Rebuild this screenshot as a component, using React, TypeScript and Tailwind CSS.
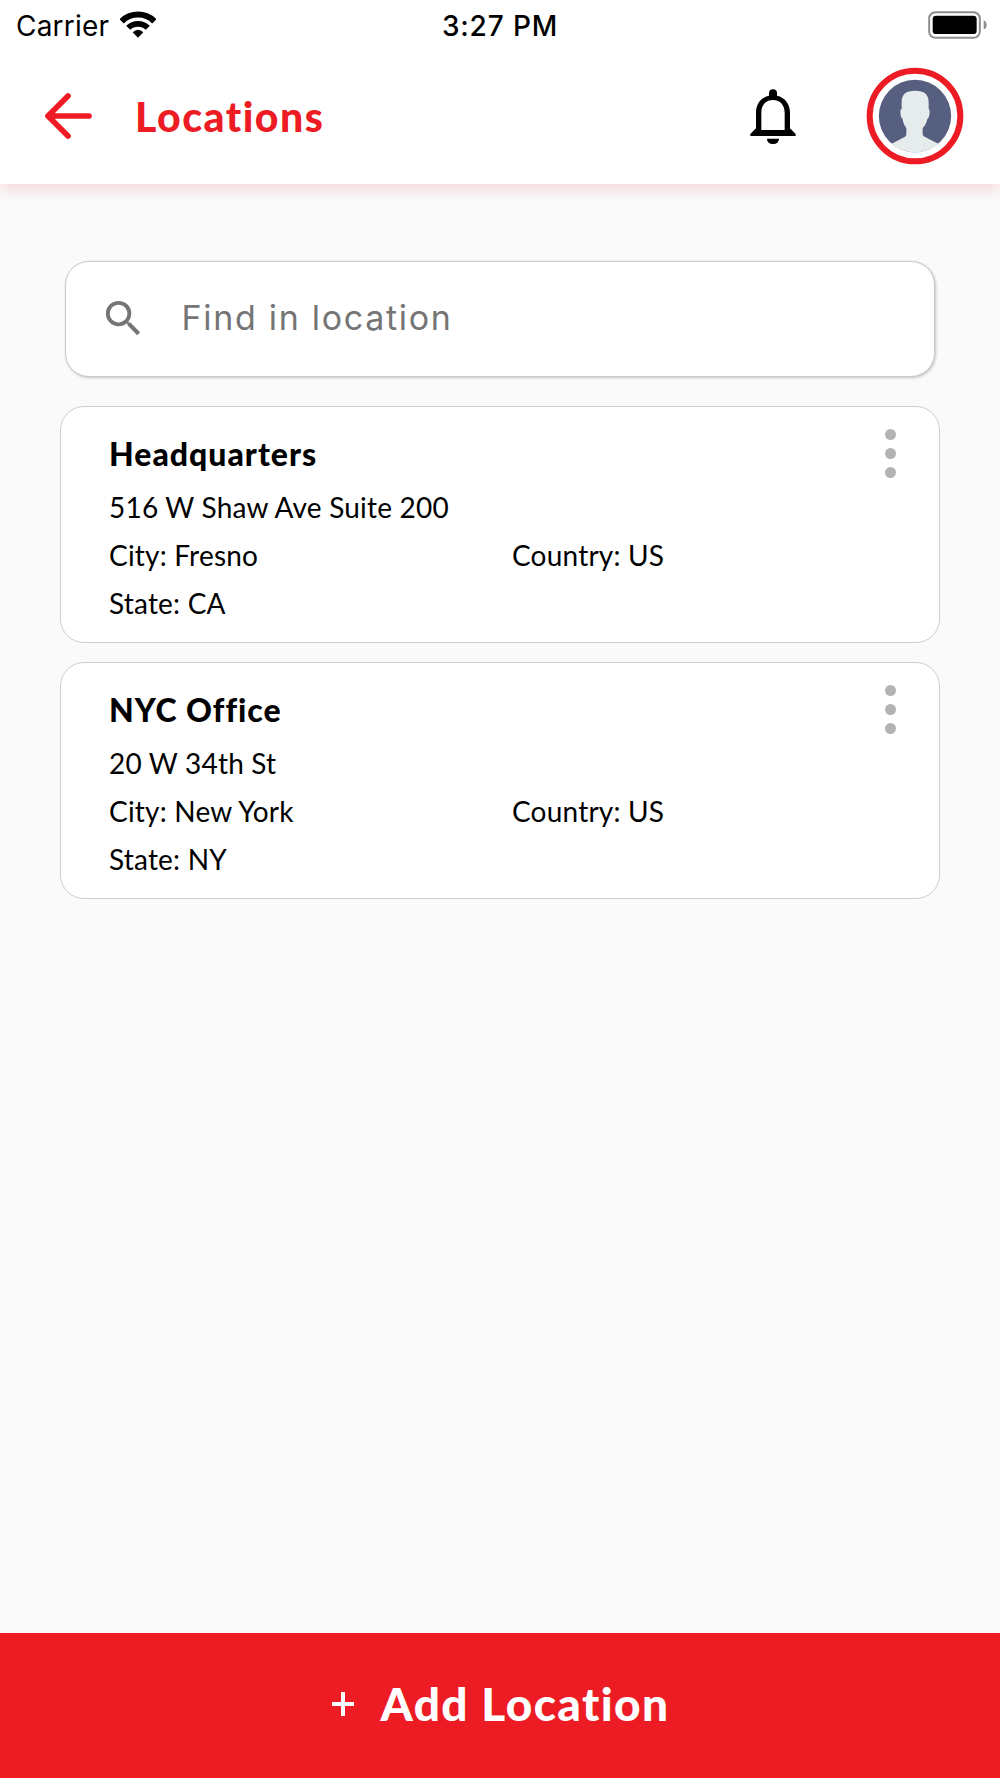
import { MdSearch } from "react-icons/md";

type Location = { name: string; address: string; city: string; state: string; country: string };

const locations: Location[] = [
  { name: "Headquarters", address: "516 W Shaw Ave Suite 200", city: "Fresno", state: "CA", country: "US" },
  { name: "NYC Office", address: "20 W 34th St", city: "New York", state: "NY", country: "US" },
];

function WifiIcon() {
  return (
    <svg className="mb-[3px] h-[27px] w-[36px]" viewBox="0 0 108 81" fill="none" stroke="#000">
      <path d="M5 31A69.5 69.5 0 0 1 103 31" strokeWidth="18" />
      <path d="M24.5 50.5A42 42 0 0 1 83.500 50.5" strokeWidth="17" />
      <path d="M54 80L38 64Q54 48 70 64Z" fill="#000" stroke="none" />
    </svg>
  );
}

function BatteryIcon() {
  return (
    <svg className="mb-[3px] h-[28px] w-[59px]" viewBox="0 0 177 84">
      <rect x="3.500" y="3.500" width="152" height="77" rx="19" fill="none" stroke="#8e8e8e" strokeWidth="6" />
      <rect x="14" y="14" width="132" height="55" rx="10" fill="#000" />
      <path d="M167 28Q176 32 176 42T167 56Z" fill="#8e8e8e" />
    </svg>
  );
}

function StatusBar() {
  return (
    <div className="grid h-[52px] grid-cols-[1fr_auto_1fr] items-center pl-[16px] pr-[13px] font-['Inter',sans-serif] text-[28px] leading-[52px] text-black">
      <div className="flex items-center gap-[11px]">
        <span className="tracking-[0.2px]">Carrier</span>
        <WifiIcon />
      </div>
      <span className="-ml-[3px] font-medium tracking-[0.85px]">3:27 PM</span>
      <div className="flex justify-end">
        <BatteryIcon />
      </div>
    </div>
  );
}

function BackArrow() {
  return (
    <svg
      className="h-[46px] w-[47px]"
      viewBox="0 0 141 138"
      fill="none"
      stroke="#ed1c24"
      strokeWidth="17"
      strokeLinecap="round"
      strokeLinejoin="round"
    >
      <path d="M132 69H9M69 9L9 69L69 129" />
    </svg>
  );
}

function BellIcon() {
  return (
    <svg className="mt-[2px] h-[56px] w-[46px]" viewBox="0 0 138 168">
      <path
        fillRule="evenodd"
        d="M57 13A12 12 0 0 1 81 13V20C105 25 120 45 120 71V118L137 135V141H1V135L18 118V71C18 45 33 25 57 20ZM69 33C47 33 34 49 34 71V123H104V71C104 49 91 33 69 33Z"
      />
      <path d="M51 149H87C87 159 79 165 69 165S51 159 51 149Z" />
    </svg>
  );
}

function Avatar() {
  return (
    <svg className="h-[98px] w-[98px]" viewBox="0 0 294 294">
      <clipPath id="avatar-disc">
        <circle cx="147" cy="147" r="109" />
      </clipPath>
      <circle cx="147" cy="147" r="136" fill="#fff" stroke="#ed1c24" strokeWidth="18" />
      <circle cx="147" cy="147" r="108.500" fill="#565f80" />
      <path
        clipPath="url(#avatar-disc)"
        fill="#e6ecec"
        d="M107 106C107 82 119 71 147 71S188 82 188 106V126Q191 127 191 133C191 145 189 154 184 156C182 168 177 176 170 183V202Q171 207 176 209L225 235V262H69V235L117 209Q121 207 121 202V183C116 176 111 168 110 156C105 154 103 145 103 133Q103 127 107 126Z"
      />
    </svg>
  );
}

function Header() {
  return (
    <header className="relative h-[184px] bg-white shadow-[0_7px_14px_-1px_rgba(215,28,46,0.15)]">
      <StatusBar />
      <div className="flex h-[128px] items-center pl-[45px] pr-[36px]">
        <BackArrow />
        <h1 className="ml-[43px] flex-1 pt-[1px] text-[41px] font-black leading-[48px] tracking-[1.500px] text-[#ed1c24]">
          Locations
        </h1>
        <BellIcon />
        <div className="ml-[70px]">
          <Avatar />
        </div>
      </div>
    </header>
  );
}

function SearchField() {
  return (
    <div className="mx-[65px] mt-[77px] flex h-[116px] items-center rounded-[24px] border-[1.500px] border-[#cacaca] bg-white pl-[33.500px] text-[#757575] shadow-[1px_1px_3px_rgba(0,0,0,0.22)]">
      <MdSearch className="mb-[2px] size-[47px]" />
      <span className="mb-[2px] ml-[35px] font-['Inter',sans-serif] text-[34px] leading-[48px] tracking-[1.700px]">
        Find in location
      </span>
    </div>
  );
}

function LocationCard({ location }: { location: Location }) {
  return (
    <article className="relative h-[237px] rounded-[24px] border border-[#cecece] bg-white pl-[48px] pt-[23px] text-[28px] leading-[48px] text-black">
      <h2 className="mb-[5px] text-[32px] font-black tracking-[1px]">{location.name}</h2>
      <p className="tracking-[0.2px]">{location.address}</p>
      <div className="grid grid-cols-[403px_1fr] tracking-[0.2px]">
        <span>City: {location.city}</span>
        <span>Country: {location.country}</span>
        <span>State: {location.state}</span>
      </div>
      <button aria-label="More options" className="absolute right-[43px] top-[22px] flex flex-col gap-[8px]">
        <i className="size-[11px] rounded-full bg-[#b3b3b3]" />
        <i className="size-[11px] rounded-full bg-[#b3b3b3]" />
        <i className="size-[11px] rounded-full bg-[#b3b3b3]" />
      </button>
    </article>
  );
}

export default function App() {
  return (
    <div className="flex h-[1778px] w-[1000px] flex-col bg-[#fafafa] font-['Lato',sans-serif]">
      <Header />
      <main className="flex-1">
        <SearchField />
        <div className="mx-[60px] mt-[29px] flex flex-col gap-[19px]">
          {locations.map((location) => (
            <LocationCard key={location.name} location={location} />
          ))}
        </div>
      </main>
      <button className="flex h-[145px] items-center justify-center bg-[#ed1c24] pb-[4px] pl-[2px] text-white">
        <svg className="h-[24px] w-[22px]" viewBox="0 0 22 24" stroke="currentColor" strokeWidth="4">
          <path d="M11 0V24M0 12H22" />
        </svg>
        <span className="ml-[26px] text-[46px] font-black leading-[54px] tracking-[1.400px]">Add Location</span>
      </button>
    </div>
  );
}
